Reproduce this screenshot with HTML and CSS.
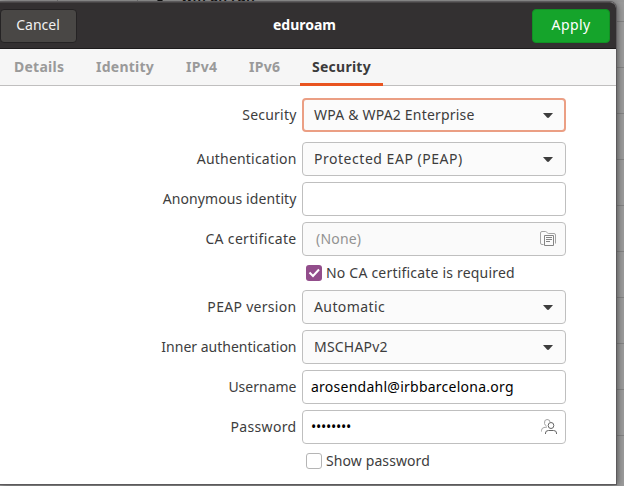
FILE: index.html
```html
<!DOCTYPE html>
<html lang="en">
<head>
<meta charset="utf-8">
<title>eduroam</title>
<link rel="stylesheet" href="styles.css">
</head>
<body>
<div class="backdrop"><span class="backdrop-dot"></span><span class="backdrop-text">wm on run</span></div>
<main class="dialog">
  <header class="header">
    <button class="btn cancel">Cancel</button>
    <h1 class="title">eduroam</h1>
    <button class="btn apply">Apply</button>
  </header>
  <nav class="tabs">
    <a class="tab details">Details</a>
    <a class="tab identity">Identity</a>
    <a class="tab ip">IPv4</a>
    <a class="tab ip">IPv6</a>
    <a class="tab active">Security</a>
  </nav>
  <form class="form">
    <div class="row first"><label class="sp20">Security</label><div class="field select focus"><span class="sp20">WPA &amp; WPA2 Enterprise</span><svg class="arrow" viewBox="0 0 10 5"><path d="M0 0H10L6 4.5Q5 5.3 4 4.5Z"/></svg></div></div>
    <div class="row"><label class="sp20">Authentication</label><div class="field select"><span class="sp50">Protected EAP (PEAP)</span><svg class="arrow" viewBox="0 0 10 5"><path d="M0 0H10L6 4.5Q5 5.3 4 4.5Z"/></svg></div></div>
    <div class="row"><label class="sp10">Anonymous identity</label><div class="field"></div></div>
    <div class="row"><label class="sp35">CA certificate</label><div class="field file"><span class="sp20">(None)</span>
      <svg class="icon" viewBox="0 0 16 16"><path class="faint" d="M3.5 13.5H2Q.5 13.5 .5 12V2Q.5 .5 2 .5H5.5Q6.5 .5 7 1.5T8.5 2.5H14Q15.5 2.5 15.5 4V12.5"/><path d="M4.5 4.5H13.5V14.5H4.5ZM6 6.5H12M6 8.5H12M6 10.5H10"/></svg></div></div>
    <div class="row check"><span class="box checked"><svg viewBox="0 0 16 16"><path d="M3.5 7.5L7 11L13 4.5"/></svg></span><span class="sp20">No CA certificate is required</span></div>
    <div class="row"><label class="sp30">PEAP version</label><div class="field select"><span class="sp40">Automatic</span><svg class="arrow" viewBox="0 0 10 5"><path d="M0 0H10L6 4.5Q5 5.3 4 4.5Z"/></svg></div></div>
    <div class="row"><label>Inner authentication</label><div class="field select"><span class="sp20">MSCHAPv2</span><svg class="arrow" viewBox="0 0 10 5"><path d="M0 0H10L6 4.5Q5 5.3 4 4.5Z"/></svg></div></div>
    <div class="row"><label>Username</label><div class="field entry"><span class="sp25">arosendahl@irbbarcelona.org</span></div></div>
    <div class="row"><label class="sp35">Password</label><div class="field entry"><span class="bullets">••••••••</span>
      <svg class="icon people" viewBox="0 0 16 16"><path class="faint" d="M3.5 4.5Q3 .5 6 .5T9 3M.5 12.5V11.5Q.5 9 3 8.5L6 8M3.5 4.5Q4 6.5 5.5 7"/><ellipse cx="10" cy="6.5" rx="2.8" ry="3"/><path d="M4.5 15V14Q4.5 11.5 7.5 11.5H12.5Q15.5 11.5 15.5 14V15"/></svg></div></div>
    <div class="row check"><span class="box"></span><span class="sp10">Show password</span></div>
  </form>
</main>
</body>
</html>
```
FILE: styles.css
```css
* { box-sizing: border-box; }

body {
  margin: 0;
  width: 624px;
  height: 486px;
  overflow: hidden;
  position: relative;
  display: flex;
  flex-direction: column;
  font: 14px/20px "Noto Sans", "Open Sans", sans-serif;
  color: #3d3d3d;
  background: repeating-linear-gradient(to bottom, #9b9b9b 0 45px, #848484 45px 46px) 0 -24px;
}

.backdrop {
  height: 2px;
  overflow: hidden;
  background:
    linear-gradient(#777, #777) 57px 0 / 1px 2px no-repeat,
    linear-gradient(#777, #777) 137px 0 / 1px 2px no-repeat,
    #989898;
  display: flex;
  align-items: flex-end;
  color: #111;
}
.backdrop-dot {
  width: 6px;
  height: 6px;
  margin-left: 157px;
  border-radius: 50%;
  background: #111;
}
.backdrop-text {
  margin: 0 0 -5px 18px;
  font-size: 14px;
  font-weight: 600;
  line-height: 20px;
}

.dialog {
  width: 616px;
  height: 482px;
  background: #fff;
  border-radius: 0 6px 0 0;
  box-shadow: 0 0 0 1px #5c5a5c, 1px 1px 7px rgba(0, 0, 0, .55);
}

.header {
  height: 47px;
  padding: 0 6px 0 0;
  display: grid;
  grid-template-columns: 78px 1fr 78px;
  align-items: center;
  background: #333031;
  border-top: 1px solid #484546;
  border-bottom: 1px solid #1d1b1c;
  border-radius: 0 6px 0 0;
}
.btn {
  font: inherit;
  padding: 0;
  color: #fff;
  border-radius: 4px;
}
.cancel {
  width: 77px;
  height: 34px;
  padding: 0 1px 2px 0;
  background: #494745;
  border: 1px solid #252324;
  color: #f0f0f0;
}
.apply {
  height: 34px;
  padding-bottom: 2px;
  background: #15a42b;
  border: 1px solid #119124;
  letter-spacing: .4px;
}
.title {
  margin: 0;
  padding: 0 1px 1px 0;
  text-align: center;
  font-size: 14px;
  line-height: 20px;
  color: #fff;
}

.tabs {
  height: 37px;
  display: flex;
  background: #f6f6f6;
  border-bottom: 1px solid #c0bfbf;
}
.tab {
  height: 37px;
  padding-left: 12px;
  line-height: 36px;
  font-weight: 700;
  letter-spacing: .25px;
  color: #9a9a9a;
}
.details { width: 84px; padding-left: 14px; }
.identity { width: 90px; }
.ip { width: 63px; }
.active {
  width: 83px;
  color: #3b3b3b;
  border-bottom: 3px solid #e95420;
}

.form {
  padding-top: 12px;
  display: flex;
  flex-direction: column;
  gap: 6px;
}
.row {
  display: grid;
  grid-template-columns: 296.5px 264px;
  column-gap: 5.5px;
  align-items: center;
  height: 34px;
  white-space: nowrap;
}
.first { margin-bottom: 4px; }
.row label { text-align: right; }
.field {
  height: 34px;
  display: flex;
  align-items: center;
  justify-content: space-between;
  background: #fff;
  border: 1px solid #bfbfbf;
  border-radius: 4px;
}
.select {
  background: #fbfbfb;
  padding: 0 12px 0 11px;
}
.focus {
  border: 2px solid #eb9f84;
  padding: 0 11px 0 10px;
}
.file {
  background: #fafafa;
  color: #929292;
  padding: 0 9px 0 13px;
}
.entry {
  color: #000;
  padding: 0 8px;
}
.arrow {
  width: 10px;
  height: 5px;
  fill: #3d3d3d;
}
.icon {
  width: 16px;
  height: 16px;
  fill: none;
  stroke: #848484;
}
.people { stroke: #666; }
.icon .faint { stroke: #a3a3a3; }
.bullets {
  font-size: 14px;
  letter-spacing: -.25px;
}

.check {
  height: 22px;
  display: flex;
  gap: 4px;
  padding-left: 306px;
}
.box {
  width: 16px;
  height: 16px;
  border: 1px solid #b5b5b5;
  border-radius: 3px;
  background: #fff;
}
.checked {
  border: 0;
  background: #924d8b;
}
.checked svg {
  display: block;
  fill: none;
  stroke: #fff;
  stroke-width: 2;
}

.sp10 { letter-spacing: .1px; }
.sp20 { letter-spacing: .2px; }
.sp25 { letter-spacing: .25px; }
.sp30 { letter-spacing: .3px; }
.sp35 { letter-spacing: .33px; }
.sp40 { letter-spacing: .4px; }
.sp50 { letter-spacing: .53px; }
```
